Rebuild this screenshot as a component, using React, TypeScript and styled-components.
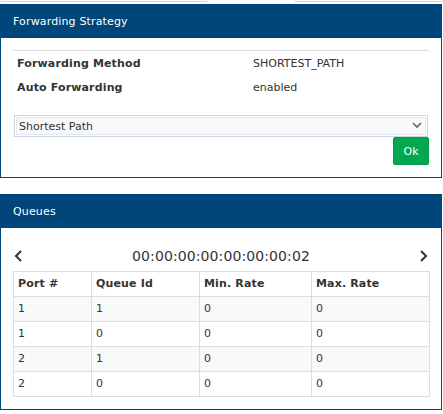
import React from "react";
import styled, { createGlobalStyle } from "styled-components";

const GlobalStyle = createGlobalStyle`
  html, body { margin: 0; padding: 0; background: #fff; }
  body {
    font-family: "DejaVu Sans", Verdana, sans-serif;
    font-size: 11px;
    color: #333;
  }
  * { box-sizing: border-box; }
`;

const Page = styled.div`
  width: 443px;
  display: flex;
  flex-direction: column;
`;

const TabStrip = styled.div`
  display: flex;
  height: 4px;
`;

const Tab = styled.div<{ $w: number; $active?: boolean }>`
  flex: 0 0 ${(p) => p.$w}px;
  height: 2px;
  border: ${(p) => (p.$active ? "none" : "1px solid #dadada")};
  border-top: none;
  border-radius: 0 0 2px 2px;
`;

const Panel = styled.section`
  width: 442px;
  border: 1px solid #00467a;
  background: #fff;
  margin-bottom: 16px;
`;

const PanelHeader = styled.header`
  height: 33px;
  background: #00467a;
  color: #fff;
  padding: 0 12px;
  display: flex;
  align-items: center;
  letter-spacing: 0.15px;
`;

const PanelBody = styled.div`
  padding: 12px;
  display: flex;
  flex-direction: column;
`;

const Divider = styled.hr`
  margin: 0;
  border: none;
  border-top: 1px solid #dddddd;
`;

const InfoGrid = styled.div`
  display: grid;
  grid-template-columns: 236px 1fr;
  grid-auto-rows: 24px;
  align-items: center;
`;

const InfoLabel = styled.div`
  padding: 0 4px;
  font-weight: bold;
  letter-spacing: 0.15px;
`;

const InfoValue = styled.div`
  padding: 0 4px;
`;

const SelectWrap = styled.div`
  position: relative;
  margin: 16px 1px 0;
`;

const Select = styled.select`
  appearance: none;
  -webkit-appearance: none;
  width: 100%;
  height: 22px;
  border: 1px solid #cdd4df;
  box-shadow: inset 0 0 0 1px #ffffff, inset 0 0 0 2px #e3e8ef;
  background: #f8f9fa;
  color: #333;
  font-family: "DejaVu Sans", Verdana, sans-serif;
  font-size: 11px;
  padding: 0 20px 0 4px;
  margin: 0;
  outline: none;
`;

const SelectArrow = styled.svg`
  position: absolute;
  right: 6px;
  top: 7px;
  pointer-events: none;
`;

const ButtonRow = styled.div`
  display: flex;
  justify-content: flex-end;
`;

const OkButton = styled.button`
  width: 36px;
  height: 28px;
  background: #00a94f;
  border: 1px solid #029a48;
  border-radius: 2px;
  color: #fff;
  font-family: "DejaVu Sans", Verdana, sans-serif;
  font-size: 11px;
  padding: 0;
  cursor: pointer;
`;

const NavRow = styled.div`
  height: 31px;
  display: flex;
  align-items: center;
  justify-content: space-between;
`;

const NavArrow = styled.svg`
  flex: 0 0 auto;
  display: block;
`;

const DeviceId = styled.div`
  font-size: 14px;
  line-height: 16px;
  letter-spacing: 0.1px;
  color: #333;
`;

const Table = styled.table`
  width: 416px;
  border-collapse: collapse;
  table-layout: fixed;
`;

const Col = styled.col<{ $w: number }>`
  width: ${(p) => p.$w}px;
`;

const Th = styled.th`
  border: 1px solid #dddddd;
  padding: 5px 4px;
  line-height: 14px;
  text-align: left;
  font-weight: bold;
  letter-spacing: 0.15px;
`;

const Tr = styled.tr<{ $striped?: boolean }>`
  background: ${(p) => (p.$striped ? "#f9f9f9" : "#ffffff")};
`;

const Td = styled.td`
  border: 1px solid #dddddd;
  padding: 5px 4px;
  line-height: 14px;
  text-align: left;
`;

const queues = [
  { port: 1, id: 1, min: 0, max: 0 },
  { port: 1, id: 0, min: 0, max: 0 },
  { port: 2, id: 1, min: 0, max: 0 },
  { port: 2, id: 0, min: 0, max: 0 },
];

export default function App() {
  return (
    <>
      <GlobalStyle />
      <Page>
        <TabStrip>
          <Tab $w={208} />
          <Tab $w={87} $active />
          <Tab $w={148} />
        </TabStrip>

        <Panel>
          <PanelHeader>Forwarding Strategy</PanelHeader>
          <PanelBody>
            <Divider />
            <InfoGrid>
              <InfoLabel>Forwarding Method</InfoLabel>
              <InfoValue>SHORTEST_PATH</InfoValue>
              <InfoLabel>Auto Forwarding</InfoLabel>
              <InfoValue>enabled</InfoValue>
            </InfoGrid>
            <SelectWrap>
              <Select defaultValue="shortest">
                <option value="shortest">Shortest Path</option>
              </Select>
              <SelectArrow width="10" height="7" viewBox="0 0 10 7">
                <polyline points="1,1 5,5 9,1" fill="none" stroke="#666" strokeWidth="1.6" />
              </SelectArrow>
            </SelectWrap>
            <ButtonRow>
              <OkButton>Ok</OkButton>
            </ButtonRow>
          </PanelBody>
        </Panel>

        <Panel>
          <PanelHeader>Queues</PanelHeader>
          <PanelBody>
            <NavRow>
              <NavArrow width="10" height="12" viewBox="0 0 10 12">
                <polyline points="8,1 3,6 8,11" fill="none" stroke="#333" strokeWidth="2" />
              </NavArrow>
              <DeviceId>00:00:00:00:00:00:00:02</DeviceId>
              <NavArrow width="10" height="12" viewBox="0 0 10 12">
                <polyline points="2,1 7,6 2,11" fill="none" stroke="#333" strokeWidth="2" />
              </NavArrow>
            </NavRow>
            <Table>
              <colgroup>
                <Col $w={78} />
                <Col $w={108} />
                <Col $w={112} />
                <Col $w={118} />
              </colgroup>
              <thead>
                <tr>
                  <Th>Port #</Th>
                  <Th>Queue Id</Th>
                  <Th>Min. Rate</Th>
                  <Th>Max. Rate</Th>
                </tr>
              </thead>
              <tbody>
                {queues.map((q, i) => (
                  <Tr key={i} $striped={i % 2 === 0}>
                    <Td>{q.port}</Td>
                    <Td>{q.id}</Td>
                    <Td>{q.min}</Td>
                    <Td>{q.max}</Td>
                  </Tr>
                ))}
              </tbody>
            </Table>
          </PanelBody>
        </Panel>
      </Page>
    </>
  );
}
